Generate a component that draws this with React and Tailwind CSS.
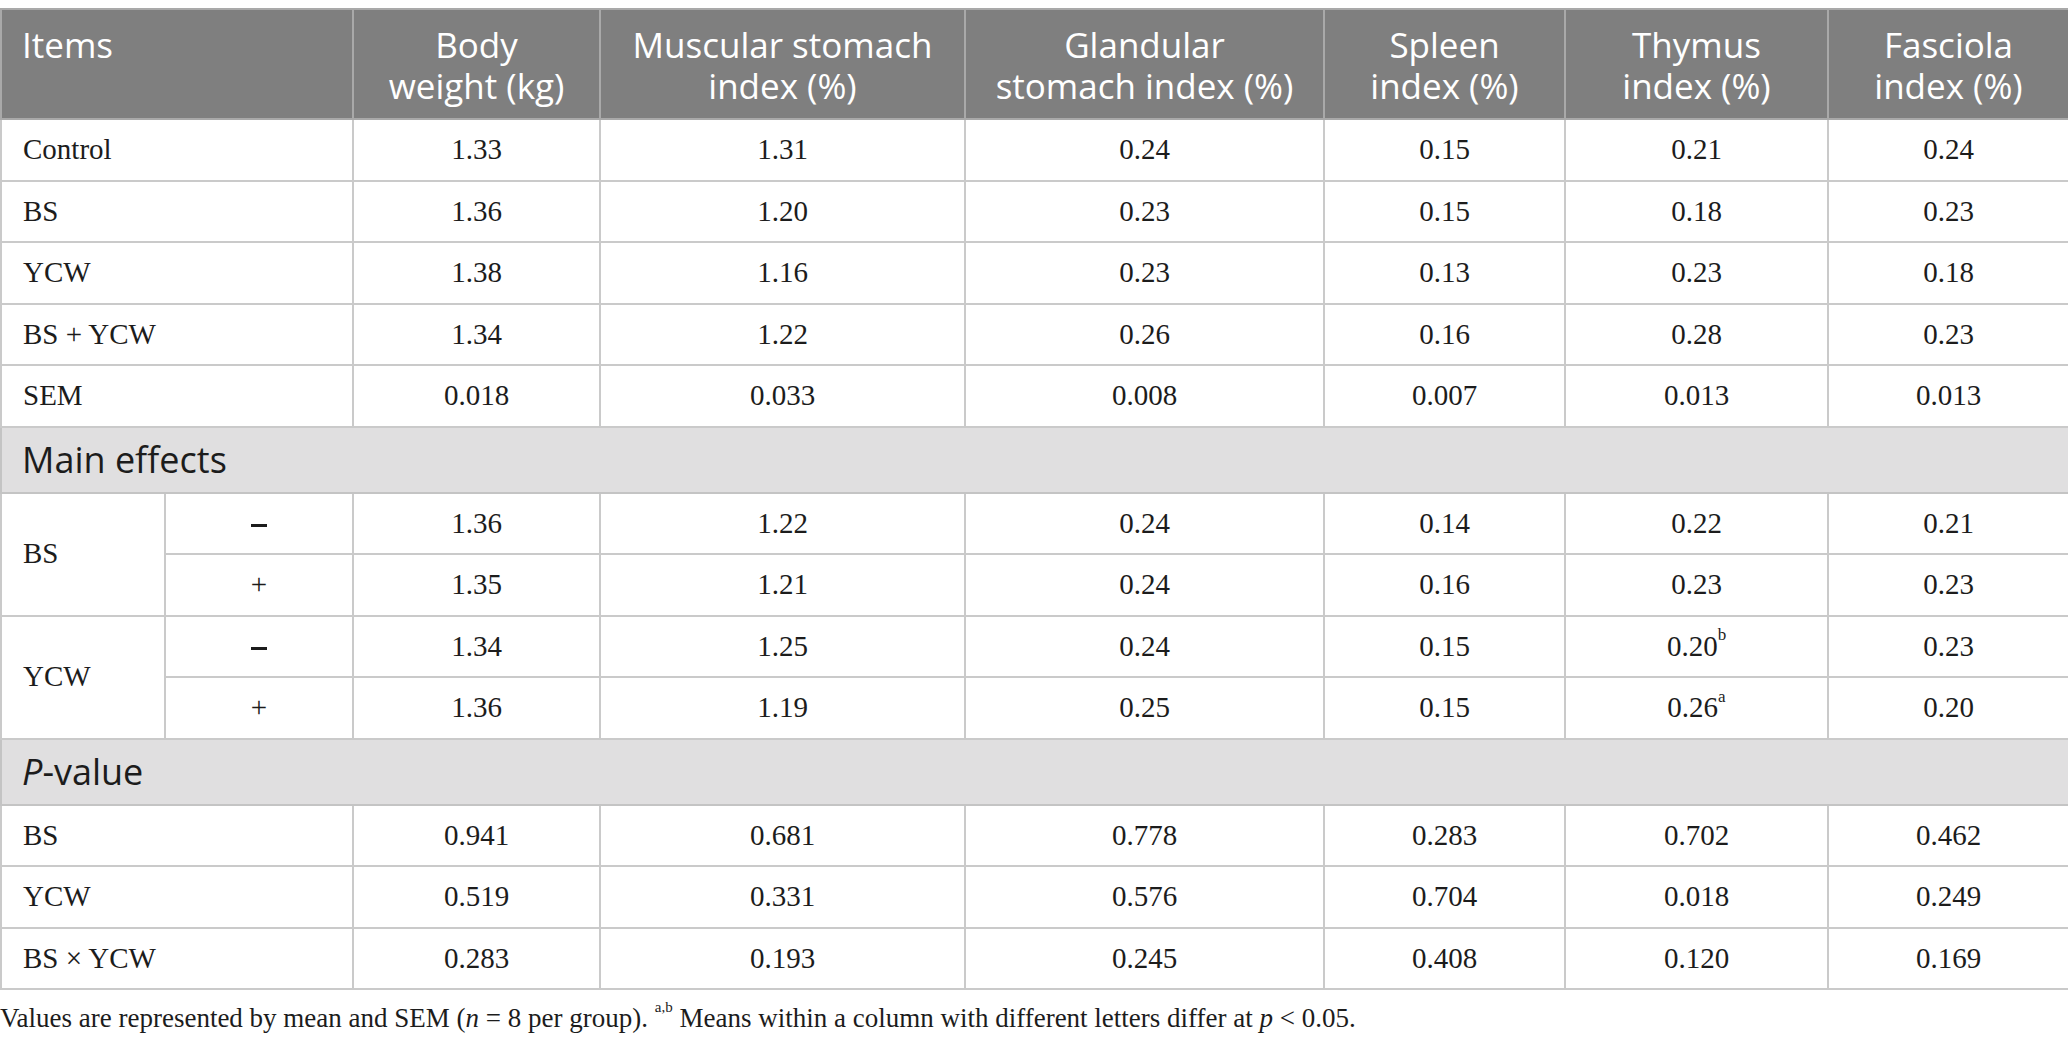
const serif = { fontFamily: '"Liberation Serif", "Times New Roman", serif' };
const sans = { fontFamily: '"Open Sans", sans-serif' };

const headers = [
    ["Body", "weight (kg)"],
    ["Muscular stomach", "index (%)"],
    ["Glandular", "stomach index (%)"],
    ["Spleen", "index (%)"],
    ["Thymus", "index (%)"],
    ["Fasciola", "index (%)"],
];

const groups = [
    ["Control", "1.33", "1.31", "0.24", "0.15", "0.21", "0.24"],
    ["BS", "1.36", "1.20", "0.23", "0.15", "0.18", "0.23"],
    ["YCW", "1.38", "1.16", "0.23", "0.13", "0.23", "0.18"],
    ["BS + YCW", "1.34", "1.22", "0.26", "0.16", "0.28", "0.23"],
    ["SEM", "0.018", "0.033", "0.008", "0.007", "0.013", "0.013"],
];

// sign column: true = minus
const effects = [
    {
        name: "BS",
        rows: [
            [true, "1.36", "1.22", "0.24", "0.14", "0.22", "0.21"],
            [false, "1.35", "1.21", "0.24", "0.16", "0.23", "0.23"],
        ],
    },
    {
        name: "YCW",
        rows: [
            [true, "1.34", "1.25", "0.24", "0.15", ["0.20", "b"], "0.23"],
            [false, "1.36", "1.19", "0.25", "0.15", ["0.26", "a"], "0.20"],
        ],
    },
];

const pvalues = [
    ["BS", "0.941", "0.681", "0.778", "0.283", "0.702", "0.462"],
    ["YCW", "0.519", "0.331", "0.576", "0.704", "0.018", "0.249"],
    ["BS × YCW", "0.283", "0.193", "0.245", "0.408", "0.120", "0.169"],
];

const cell = "border-2 border-[#cacaca] text-[29px] text-[#1c1c1c]";

const Value = ({ v }) =>
    Array.isArray(v) ? (
        <span>
            {v[0]}
            <sup className="text-[17px] align-[7px]">{v[1]}</sup>
        </span>
    ) : (
        v
    );

const SectionRow = ({ children }) => (
    <tr className="h-[66px] bg-[#e0dfe0]">
        <td colSpan={8} className="border-2 border-[#c4c4c4] pl-[20px] text-[36px] text-[#1c1c1c]" style={sans}>
            {children}
        </td>
    </tr>
);

export default function App() {
    return (
        <div className="w-[2068px] bg-white pt-[8px]">
            <table className="w-full table-fixed border-collapse" style={serif}>
                <colgroup>
                    <col className="w-[164px]" />
                    <col className="w-[188px]" />
                    <col className="w-[247px]" />
                    <col className="w-[365px]" />
                    <col className="w-[359px]" />
                    <col className="w-[241px]" />
                    <col className="w-[263px]" />
                    <col className="w-[241px]" />
                </colgroup>
                <thead>
                    <tr className="h-[110px] bg-[#7f7f7f] text-white" style={sans}>
                        <th colSpan={2} className="border-2 border-[#a9a9a9] pl-[20px] pt-[14px] text-left align-top text-[35px] font-normal leading-[41px]">
                            Items
                        </th>
                        {headers.map((h) => (
                            <th key={h[0]} className="border-2 border-[#a9a9a9] pt-[14px] text-center align-top text-[35px] font-normal leading-[41px]">
                                <div>{h[0]}</div>
                                <div>{h[1]}</div>
                            </th>
                        ))}
                    </tr>
                </thead>
                <tbody>
                    {groups.map((r) => (
                        <tr key={r[0]} className="h-[61.5px]">
                            <td colSpan={2} className={`${cell} pl-[21px] text-left`}>{r[0]}</td>
                            {r.slice(1).map((v, i) => (
                                <td key={i} className={`${cell} text-center`}>{v}</td>
                            ))}
                        </tr>
                    ))}

                    {/* Main effects */}
                    <SectionRow>Main effects</SectionRow>
                    {effects.map((g) =>
                        g.rows.map((r, ri) => (
                            <tr key={g.name + ri} className="h-[61.5px]">
                                {ri === 0 && (
                                    <td rowSpan={2} className={`${cell} pl-[21px] text-left`}>{g.name}</td>
                                )}
                                <td className={`${cell} text-center`}>
                                    {r[0] ? (
                                        <span className="inline-block h-[3px] w-[16px] bg-[#1c1c1c] align-middle" />
                                    ) : (
                                        "+"
                                    )}
                                </td>
                                {r.slice(1).map((v, i) => (
                                    <td key={i} className={`${cell} text-center`}>
                                        <Value v={v} />
                                    </td>
                                ))}
                            </tr>
                        ))
                    )}

                    {/* P-values */}
                    <SectionRow>
                        <i>P</i>-value
                    </SectionRow>
                    {pvalues.map((r) => (
                        <tr key={r[0]} className="h-[61.5px]">
                            <td colSpan={2} className={`${cell} pl-[21px] text-left`}>{r[0]}</td>
                            {r.slice(1).map((v, i) => (
                                <td key={i} className={`${cell} text-center`}>{v}</td>
                            ))}
                        </tr>
                    ))}
                </tbody>
            </table>
            <p className="mt-[12px] text-[27px] leading-[32px] text-[#1c1c1c]" style={serif}>
                Values are represented by mean and SEM (<i>n</i> = 8 per group). <sup className="text-[15px] align-[8px]">a,b</sup> Means within a column with different letters differ at <i>p</i> &lt; 0.05.
            </p>
        </div>
    );
}
